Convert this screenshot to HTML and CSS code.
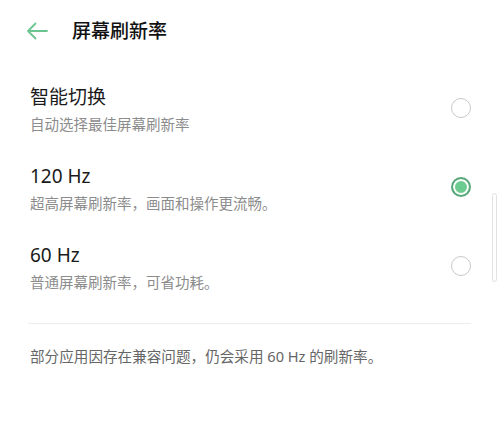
FILE: index.html
```html
<!DOCTYPE html>
<html lang="zh-CN">
<head>
<meta charset="utf-8">
<link rel="stylesheet" href="styles.css">
</head>
<body>
<div class="page">
  <header class="header">
    <svg class="back" width="22" height="18" viewBox="0 0 22 18" aria-hidden="true">
      <path d="M21 9H2.5M9.5 1.5L2 9l7.5 7.5" fill="none" stroke="#6cc490" stroke-width="1.8" stroke-linecap="round" stroke-linejoin="round"/>
    </svg>
    <h1 class="title">屏幕刷新率</h1>
  </header>
  <ul class="list">
    <li class="row">
      <div class="text">
        <div class="main">智能切换</div>
        <div class="sub">自动选择最佳屏幕刷新率</div>
      </div>
      <span class="radio"></span>
    </li>
    <li class="row">
      <div class="text">
        <div class="main">120 Hz</div>
        <div class="sub">超高屏幕刷新率，画面和操作更流畅。</div>
      </div>
      <span class="radio checked"></span>
    </li>
    <li class="row">
      <div class="text">
        <div class="main">60 Hz</div>
        <div class="sub">普通屏幕刷新率，可省功耗。</div>
      </div>
      <span class="radio"></span>
    </li>
  </ul>
  <hr class="divider">
  <p class="note">部分应用因存在兼容问题，仍会采用 60 Hz 的刷新率。</p>
  <div class="scrollbar"></div>
</div>
</body>
</html>
```
FILE: styles.css
```css
html, body {
  margin: 0;
  padding: 0;
  background: #ffffff;
}
body {
  font-family: "Noto Sans", "Noto Sans CJK SC", sans-serif;
  color: #1c1c1c;
}
.page {
  position: relative;
  width: 499px;
  height: 429px;
  overflow: hidden;
}
.header {
  height: 62px;
  display: flex;
  align-items: center;
  padding-left: 26px;
}
.back {
  display: block;
}
.title {
  margin: 0 0 0 24px;
  font-size: 19px;
  font-weight: 500;
  line-height: 26px;
  color: #111;
}
.list {
  list-style: none;
  margin: 8px 0 0;
  padding: 0;
}
.row {
  display: flex;
  align-items: center;
  justify-content: space-between;
  padding: 14px 28px 14px 30px;
}
.main {
  font-size: 19px;
  line-height: 26px;
  color: #1a1a1a;
}
.sub {
  margin-top: 3px;
  font-size: 14.5px;
  line-height: 22px;
  color: #8c8c8c;
}
.radio {
  width: 20px;
  height: 20px;
  box-sizing: border-box;
  border: 1.5px solid #c9c9c9;
  border-radius: 50%;
  margin-top: -3px;
}
.radio.checked {
  border: 2px solid #5aa77a;
  background: #6ccb8e;
  box-shadow: inset 0 0 0 2px #ffffff;
}
.divider {
  margin: 16px 28px 0;
  border: 0;
  border-top: 1px solid #ececec;
  height: 0;
}
.note {
  margin: 21px 0 0 30px;
  font-size: 14.6px;
  line-height: 22px;
  color: #666666;
}
.scrollbar {
  position: absolute;
  left: 492px;
  top: 193px;
  width: 5px;
  height: 89px;
  box-sizing: border-box;
  border: 1px solid #e2e2e2;
  border-radius: 3px;
}
```
